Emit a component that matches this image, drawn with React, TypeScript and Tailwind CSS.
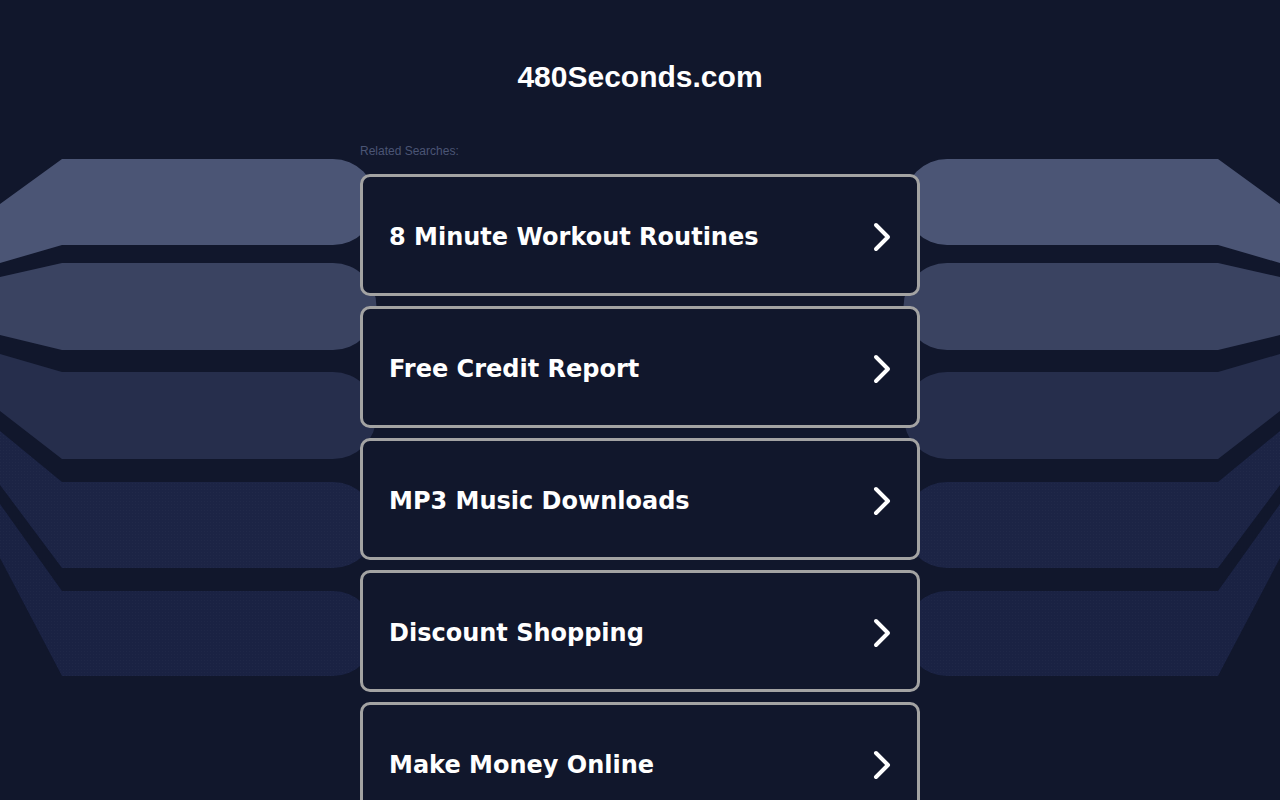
const searches = [
  "8 Minute Workout Routines",
  "Free Credit Report",
  "MP3 Music Downloads",
  "Discount Shopping",
  "Make Money Online",
];

// [topAt62, topAt0, bottomAt62, bottomAt0, fill]
const bands: [number, number, number, number, string][] = [
  [159, 204, 245, 263, "#4b5575"],
  [263, 277, 350, 335, "#3a4361"],
  [372, 354, 459, 411, "#262e4c"],
  [482, 431, 568, 485, "#1c2445"],
  [591, 504, 676, 558, "#1a2243"],
];

function bandPath(t: number, t0: number, b: number, b0: number) {
  const r = (b - t) / 2;
  return `M0 ${t0} L62 ${t} L333 ${t} A${r} ${r} 0 0 1 333 ${b} L62 ${b} L0 ${b0} Z`;
}

function Backdrop() {
  return (
    <svg
      className="pointer-events-none absolute inset-0 h-[800px] w-full"
      viewBox="0 0 1280 800"
      preserveAspectRatio="none"
    >
      <defs>
        <pattern id="dots" width="3" height="3" patternUnits="userSpaceOnUse">
          <rect width="1" height="1" fill="#ffffff" opacity="0.025" />
        </pattern>
      </defs>
      {[false, true].map((mirror) => (
        <g key={String(mirror)} transform={mirror ? "translate(1280 0) scale(-1 1)" : undefined}>
          {bands.map(([t, t0, b, b0, fill], i) => (
            <g key={t}>
              <path d={bandPath(t, t0, b, b0)} fill={fill} />
              {i > 2 && <path d={bandPath(t, t0, b, b0)} fill="url(#dots)" />}
            </g>
          ))}
        </g>
      ))}
    </svg>
  );
}

function Chevron() {
  return (
    <svg width="20" height="30" viewBox="0 0 20 30" fill="none">
      <polyline
        points="3,3 15,15 3,27"
        stroke="#ffffff"
        strokeWidth="4"
        strokeLinecap="round"
        strokeLinejoin="round"
      />
    </svg>
  );
}

export default function App() {
  return (
    <div className="relative min-h-[800px] overflow-hidden bg-[#11172c]">
      <Backdrop />
      <div className="relative mx-auto flex w-[560px] flex-col pt-[59px]">
        <h1 className="text-center font-['Liberation_Sans',Arial,sans-serif] text-[30px] font-bold leading-9 text-white">
          480Seconds.com
        </h1>
        <p className="mt-[48px] font-['Liberation_Sans',Arial,sans-serif] text-xs leading-4 text-[#4b5575]">
          Related Searches:
        </p>
        <div className="mt-[15px] flex flex-col gap-[10px]">
          {searches.map((s) => (
            <a
              key={s}
              href="#"
              className="flex h-[122px] items-center justify-between rounded-[10px] border-[3px] border-[#a3a3a3] bg-[#11172c] pl-[26px] pr-[24px] pt-[3px] font-['DejaVu_Sans',Verdana,sans-serif] text-2xl font-bold text-white"
            >
              <span>{s}</span>
              <Chevron />
            </a>
          ))}
        </div>
      </div>
    </div>
  );
}
